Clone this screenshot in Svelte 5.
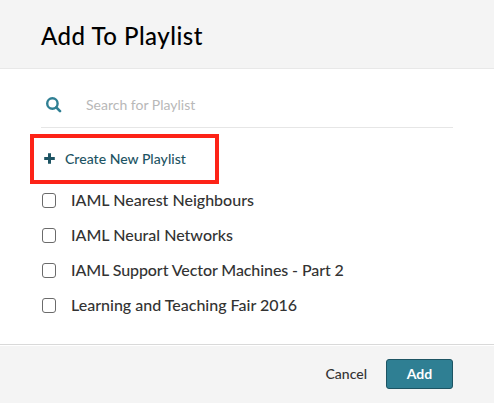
<script>
  const playlists = [
    'IAML Nearest Neighbours',
    'IAML Neural Networks',
    'IAML Support Vector Machines - Part 2',
    'Learning and Teaching Fair 2016'
  ];
</script>

<div class="dialog">
  <header><h1>Add To Playlist</h1></header>
  <main>
    <div class="search">
      <svg class="lens" width="16" height="16" viewBox="0 0 16 16">
        <circle cx="6.4" cy="6.5" r="5.2" fill="none" stroke="#2f7f93" stroke-width="2.4" />
        <path d="M10.3 10.4L14 14.1" stroke="#2f7f93" stroke-width="2.7" stroke-linecap="round" />
      </svg>
      <input type="text" placeholder="Search for Playlist" />
    </div>
    <button class="create">
      <svg width="11" height="11" viewBox="0 0 11 11">
        <path d="M5.5 0.2V10.8M0.2 5.5H10.8" stroke="#1d5463" stroke-width="3" />
      </svg>
      <span>Create New Playlist</span>
    </button>
    <ul>
      {#each playlists as name}
        <li><label class:tight={name.length > 32}><input type="checkbox" /><span>{name}</span></label></li>
      {/each}
    </ul>
  </main>
  <footer>
    <button class="cancel">Cancel</button>
    <button class="add">Add</button>
  </footer>
</div>

<style>
  .dialog {
    width: 494px;
    height: 403px;
    display: flex;
    flex-direction: column;
    background: #fff;
    color: #333;
    font-family: Lato, sans-serif;
    font-weight: 500;
    overflow: hidden;
  }
  .dialog * { box-sizing: border-box; }
  button, input { font: inherit; margin: 0; padding: 0; }
  header {
    height: 69px;
    padding: 4px 41px 0;
    display: flex;
    align-items: center;
    background: #f4f4f4;
    border-bottom: 1px solid #e8e8e8;
  }
  h1 {
    margin: 0;
    font-size: 24px;
    line-height: 30px;
    font-weight: 500;
    letter-spacing: 0.5px;
    color: #000;
    white-space: nowrap;
  }
  main { flex: 1; padding: 14px 41px 0; }
  .search {
    height: 45px;
    display: flex;
    align-items: center;
    padding-left: 5px;
    border-bottom: 1px solid #e6e6e6;
  }
  .search input {
    flex: 1;
    margin-left: 24px;
    padding-bottom: 2px;
    border: 0;
    outline: 0;
    background: none;
    font-size: 14px;
    font-weight: 400;
    color: #333;
  }
  .search input::placeholder { color: #b8b8b8; opacity: 1; }
  .create {
    width: 189px;
    height: 50px;
    margin: 6px 0 0 -11px;
    padding-left: 10px;
    display: flex;
    align-items: center;
    gap: 10px;
    border: 4px solid #fd2317;
    background: #fff;
    color: #1d5463;
    font-size: 14px;
    white-space: nowrap;
  }
  .create span { padding-bottom: 2px; letter-spacing: 0.03px; }
  .create svg { margin-bottom: 1px; }
  ul { margin: 0; padding: 0; list-style: none; }
  li { height: 35px; }
  label { height: 34px; display: flex; align-items: center; font-size: 16px; white-space: nowrap; }
  label span { padding-bottom: 3px; }
  .tight { letter-spacing: -0.09px; }
  label input {
    appearance: none;
    width: 14px;
    height: 15px;
    margin: 0 15px 1px 1px;
    border: 1px solid #6b6b6b;
    border-radius: 3px;
    background: #fff;
  }
  footer {
    height: 59px;
    padding: 0 41px 0 0;
    display: flex;
    justify-content: flex-end;
    align-items: center;
    border-top: 1px solid #d9d9d9;
    box-shadow: inset 0 1px #fff;
    background: #f4f4f4;
    font-size: 14px;
  }
  .cancel { margin-right: 19px; padding-bottom: 2px; border: 0; background: none; color: #333; }
  .add {
    width: 67px;
    height: 30px;
    padding-bottom: 2px;
    border: 1px solid #1d5463;
    border-radius: 3px;
    background: #2f7f93;
    color: #fff;
    font-weight: 700;
  }
</style>
